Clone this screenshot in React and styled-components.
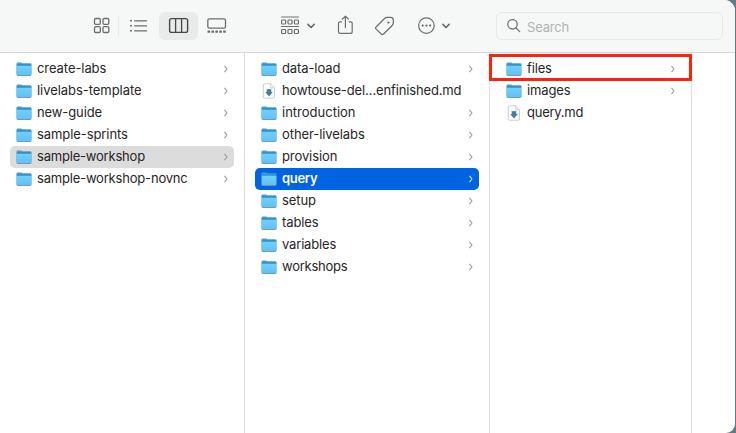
import React from "react";
import styled, { createGlobalStyle, css } from "styled-components";

const GlobalStyle = createGlobalStyle`
  * { box-sizing: border-box; }
  body { margin: 0; background: #62797d; font-family: Inter, "Liberation Sans", sans-serif; overflow: hidden; }
`;

const Window = styled.div`
  width: 735px;
  height: 433px;
  display: flex;
  flex-direction: column;
  overflow: hidden;
  background: #fff;
  border-radius: 0 11px 9px 0;
`;

const Toolbar = styled.header`
  height: 53px;
  flex: none;
  display: flex;
  align-items: flex-start;
  padding: 12px 12px 0 84px;
  background: #f6f8f7;
  border-bottom: 1px solid #d5d7d6;
`;

const ToolButton = styled.span`
  width: ${(p) => p.$width}px;
  height: 28px;
  margin-left: ${(p) => p.$gap || 0}px;
  border-radius: 6px;
  background: ${(p) => (p.$active ? "#e9ebea" : "transparent")};
  color: ${(p) => (p.$active ? "#464848" : "#6c6e6e")};
  flex: none;
  svg { display: block; }
`;

const Divider = styled.span`
  width: 1px;
  height: 20px;
  margin-top: 4px;
  background: #e6e8e7;
`;

const SearchField = styled.div`
  width: 227px;
  height: 28px;
  margin-left: auto;
  display: flex;
  align-items: center;
  gap: 6px;
  padding: 0 10px;
  border: 1px solid #e7e9e8;
  border-radius: 6px;
  color: #b1b3b2;
  font-size: 13px;
  letter-spacing: -0.2px;
  span { padding-top: 2px; }
`;

const Browser = styled.main`
  flex: 1;
  display: flex;
`;

const Column = styled.section`
  width: ${(p) => p.$width}px;
  padding: 5px 10px 0;
  border-right: 1px solid #e0e0e0;
  flex: none;
  position: relative;
`;

const selectionStyles = {
  active: css`background: #0063e1; color: #fff; font-weight: 600;`,
  inactive: css`background: #dcdcdc;`,
};

const Row = styled.div`
  height: 22px;
  display: flex;
  align-items: center;
  padding: 0 5px 0 6px;
  border-radius: 5px;
  color: #262626;
  font-size: 13px;
  line-height: 20px;
  white-space: nowrap;
  ${(p) => selectionStyles[p.$selection]}
`;

const Label = styled.span`
  flex: 1;
  height: 22px;
  margin-left: 5px;
  letter-spacing: ${(p) => p.$tracking ?? -0.1}px;
`;

const Highlight = styled.div`
  position: absolute;
  left: -1px;
  right: -1px;
  top: 1px;
  height: 27px;
  border: 3px solid #fb2406;
`;

const FolderIcon = () => (
  <svg width="16" height="16" viewBox="0 0 16 16">
    <defs>
      <linearGradient id="folderFront" x1="0" y1="0" x2="0" y2="1">
        <stop offset="0" stopColor="#72d0fc" />
        <stop offset="1" stopColor="#5fc1f6" />
      </linearGradient>
    </defs>
    <path d="M.5 2.6Q.5 1.4 1.8 1.4H5.2L6.6 2.3H14.2Q15.5 2.3 15.5 3.5V13.4Q15.5 14.7 14.2 14.7H1.8Q.5 14.7.5 13.4Z" fill="#4f9dc8" />
    <path d="M.8 3.2H15.2V5H.8Z" fill="#2b90cb" />
    <path d="M.7 4.8H15.3V13.3Q15.3 14.1 14.3 14.1H1.7Q.7 14.1.7 13.3Z" fill="url(#folderFront)" />
    <path d="M1.4 14.5H14.6" stroke="#7296a8" strokeWidth=".8" />
  </svg>
);

const FileIcon = () => (
  <svg width="16" height="16" viewBox="0 0 16 16" fill="none">
    <path d="M3.5.8H9.5L13.5 4.7V14.2Q13.5 15.2 12.5 15.2H3.2Q2.3 15.2 2.3 14.2V1.8Q2.3.8 3.5.8Z" fill="#fff" stroke="#c0c0c0" strokeWidth=".8" />
    <path d="M9.3 1V4.9H13.3" fill="#eee" stroke="#cacaca" strokeWidth=".7" />
    <path d="M5.7 5.8L6.9 6.6 8 5.8 9.1 6.6 10.3 5.8V9.1H11.8L8 13.5 4.2 9.1H5.7Z" fill="#427f9e" />
  </svg>
);

const Disclosure = ({ light }) => (
  <svg width="6" height="8" viewBox="0 0 6 8" fill="none">
    <path d="M1.7 1.2L4 4 1.7 6.8" stroke={light ? "#dce9ff" : "#999"} strokeWidth="1.05" strokeLinecap="round" strokeLinejoin="round" />
  </svg>
);

const Glyph = ({ width, children }) => (
  <svg width={width} height="28" viewBox={`0 0 ${width} 28`} fill="none" stroke="currentColor" strokeWidth="1.3" strokeLinecap="round" strokeLinejoin="round">
    {children}
  </svg>
);

const GridGlyph = () => (
  <Glyph width={34}>
    {[10.5, 19].map((x) => [6.5, 14.7].map((y) => <rect key={`${x}${y}`} x={x} y={y} width="5.8" height="5.8" rx="1.2" />))}
  </Glyph>
);

const ListGlyph = () => (
  <Glyph width={40}>
    {[9, 14, 19].map((y) => (
      <React.Fragment key={y}>
        <path d={`M15.6 ${y - 0.2}H27.6`} />
        <circle cx="12" cy={y - 0.2} r="1" fill="currentColor" stroke="none" />
      </React.Fragment>
    ))}
  </Glyph>
);

const ColumnsGlyph = () => (
  <Glyph width={39}>
    <rect x="10.6" y="6.6" width="18" height="13.8" rx="2" strokeWidth="1.4" />
    <path d="M16.6 6.6V20.4M22.6 6.6V20.4" />
  </Glyph>
);

const GalleryGlyph = () => (
  <Glyph width={38}>
    <rect x="9.8" y="6.8" width="17.7" height="9.3" rx="1.6" />
    {[9.5, 13.4, 17.3, 21.2, 25.1].map((x) => <rect key={x} x={x} y="18.5" width="2.7" height="2.3" rx=".5" fill="currentColor" stroke="none" />)}
  </Glyph>
);

const GroupGlyph = () => (
  <Glyph width={50}>
    <path d="M6.5 5H23.5M6.5 14.5H23.5" strokeWidth="1.1" />
    {[6.6, 13, 19.4].map((x) => [8, 17.5].map((y) => <rect key={`${x}${y}`} x={x} y={y} width="4" height="4" rx=".8" strokeWidth="1.2" />))}
    <path d="M33 12.4L36.1 15.5 39.2 12.4" strokeWidth="1.7" />
  </Glyph>
);

const ShareGlyph = () => (
  <Glyph width={30}>
    <path d="M11.5 9.8H10Q8.5 9.8 8.5 11.2V19.8Q8.5 21.4 10 21.4H20.8Q22.2 21.4 22.2 19.8V11.2Q22.2 9.8 20.8 9.8H19.2M15.4 15.5V4.2M12.3 7.1L15.4 4.1 18.5 7.1" strokeWidth="1.2" />
  </Glyph>
);

const TagGlyph = () => (
  <Glyph width={34}>
    <path d="M8.1 15L16.2 6.7Q17.6 5.4 19.3 5.4H22.5Q25.3 5.4 25.3 8.2V10.5Q25.4 12.3 24 13.7L15.6 22Q14.4 23.2 13.3 22L8.1 17.1Q7 16 8.1 15Z" strokeWidth="1.25" />
    <circle cx="20.4" cy="10.6" r="1.15" fill="currentColor" stroke="none" />
  </Glyph>
);

const MoreGlyph = () => (
  <Glyph width={48}>
    <circle cx="16.4" cy="13.6" r="7.8" strokeWidth="1.2" />
    {[12.7, 16.4, 20.1].map((x) => <circle key={x} cx={x} cy="13.6" r="1.15" fill="currentColor" stroke="none" />)}
    <path d="M32.9 12.4L36 15.5 39.1 12.4" strokeWidth="1.7" />
  </Glyph>
);

const SearchGlyph = () => (
  <svg width="14" height="14" viewBox="0 0 14 14" fill="none" stroke="#6d6f6e" strokeWidth="1.25" strokeLinecap="round">
    <circle cx="5.5" cy="5.3" r="4.7" />
    <path d="M9 8.9L12.7 12.6" />
  </svg>
);

const columns = [
  {
    width: 245,
    items: [
      { name: "create-labs", tracking: -0.07 },
      { name: "livelabs-template", tracking: -0.05 },
      { name: "new-guide" },
      { name: "sample-sprints", tracking: -0.08 },
      { name: "sample-workshop", selection: "inactive", tracking: -0.2 },
      { name: "sample-workshop-novnc", tracking: -0.19 },
    ],
  },
  {
    width: 245,
    items: [
      { name: "data-load" },
      { name: "howtouse-del…enfinished.md", file: true, tracking: -0.14 },
      { name: "introduction", tracking: 0 },
      { name: "other-livelabs", tracking: -0.08 },
      { name: "provision" },
      { name: "query", selection: "active", tracking: -0.3 },
      { name: "setup" },
      { name: "tables" },
      { name: "variables", tracking: -0.17 },
      { name: "workshops", tracking: -0.24 },
    ],
  },
  {
    width: 202,
    highlighted: true,
    items: [{ name: "files", tracking: -0.15 }, { name: "images", tracking: -0.15 }, { name: "query.md", file: true, tracking: -0.25 }],
  },
];

export default function App() {
  return (
    <>
      <GlobalStyle />
      <Window>
        <Toolbar>
          <ToolButton $width={34}><GridGlyph /></ToolButton>
          <Divider />
          <ToolButton $width={40}><ListGlyph /></ToolButton>
          <ToolButton $width={39} $active><ColumnsGlyph /></ToolButton>
          <ToolButton $width={38}><GalleryGlyph /></ToolButton>
          <ToolButton $width={50} $gap={39}><GroupGlyph /></ToolButton>
          <ToolButton $width={30} $gap={5}><ShareGlyph /></ToolButton>
          <ToolButton $width={34} $gap={8}><TagGlyph /></ToolButton>
          <ToolButton $width={48} $gap={8}><MoreGlyph /></ToolButton>
          <SearchField><SearchGlyph /><span>Search</span></SearchField>
        </Toolbar>
        <Browser>
          {columns.map((column, i) => (
            <Column key={i} $width={column.width}>
              {column.items.map((item) => (
                <Row key={item.name} $selection={item.selection}>
                  {item.file ? <FileIcon /> : <FolderIcon />}
                  <Label $tracking={item.tracking}>{item.name}</Label>
                  {!item.file && <Disclosure light={item.selection === "active"} />}
                </Row>
              ))}
              {column.highlighted && <Highlight />}
            </Column>
          ))}
        </Browser>
      </Window>
    </>
  );
}
